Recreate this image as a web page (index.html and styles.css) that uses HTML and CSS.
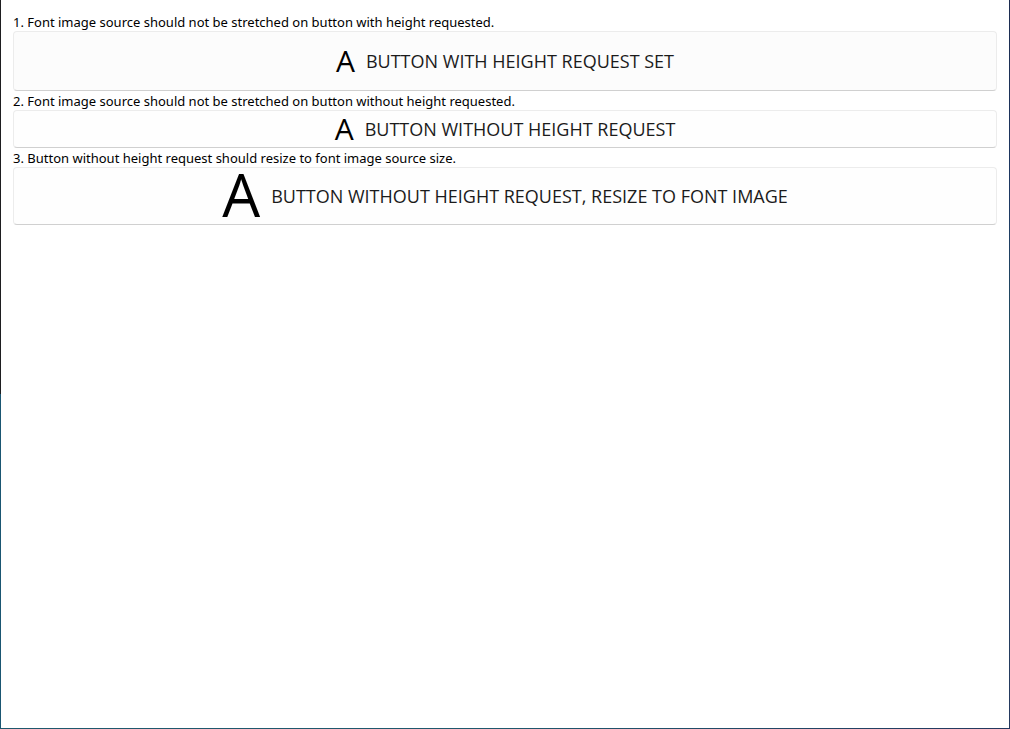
FILE: index.html
```html
<!DOCTYPE html>
<html lang="en">
<head>
<meta charset="utf-8">
<title>Font image source buttons</title>
<link rel="stylesheet" href="styles.css">
</head>
<body>
<main class="page">
  <p class="label">1. Font image source should not be stretched on button with height requested.</p>
  <button class="btn btn-tall" type="button"><span class="glyph">A</span><span>BUTTON WITH HEIGHT REQUEST SET</span></button>
  <p class="label">2. Font image source should not be stretched on button without height requested.</p>
  <button class="btn" type="button"><span class="glyph">A</span><span>BUTTON WITHOUT HEIGHT REQUEST</span></button>
  <p class="label">3. Button without height request should resize to font image source size.</p>
  <button class="btn" type="button"><span class="glyph glyph-large">A</span><span>BUTTON WITHOUT HEIGHT REQUEST, RESIZE TO FONT IMAGE</span></button>
</main>
</body>
</html>
```
FILE: styles.css
```css
* { box-sizing: border-box; }
body {
  margin: 0;
  color: #000;
  font-family: "Open Sans", "Noto Sans", sans-serif;
}
/* The window edge is a one-pixel frame on three sides, shaded by gradients. */
.page {
  display: flex;
  flex-direction: column;
  min-height: 100vh;
  padding: 12px 13px;
  background:
    linear-gradient(#1e1e20 54%, #1a5672 54%) left / 1px 100% no-repeat,
    linear-gradient(#1c2b4f, #1d3863 28%, #204a5f 45%, #24385f) right / 1px 100% no-repeat,
    linear-gradient(90deg, #1f586d 50%, #24385f) bottom / 100% 1px no-repeat,
    #fff;
}
.label {
  margin: 0;
  padding-top: 2px;
  font-family: "Noto Sans", "Open Sans", sans-serif;
  font-size: 13px;
  line-height: 17px;
}
.btn {
  display: flex;
  align-items: center;
  justify-content: center;
  gap: 11px;
  padding: 5px 12px;
  border: 1px solid #ececec;
  border-bottom-color: #d0d0d0;
  border-radius: 4px;
  background: #fefefe;
  color: #1b1b1b;
  font-family: "Open Sans", "Noto Sans", sans-serif;
  font-size: 18px;
  line-height: 24px;
}
.btn-tall {
  min-height: 60px;
  background: #fcfcfc;
}
.glyph {
  color: #000;
  font-size: 30px;
  line-height: 26px;
}
.glyph-large {
  padding-bottom: 4px;
  font-size: 60px;
  line-height: 42px;
}
```
